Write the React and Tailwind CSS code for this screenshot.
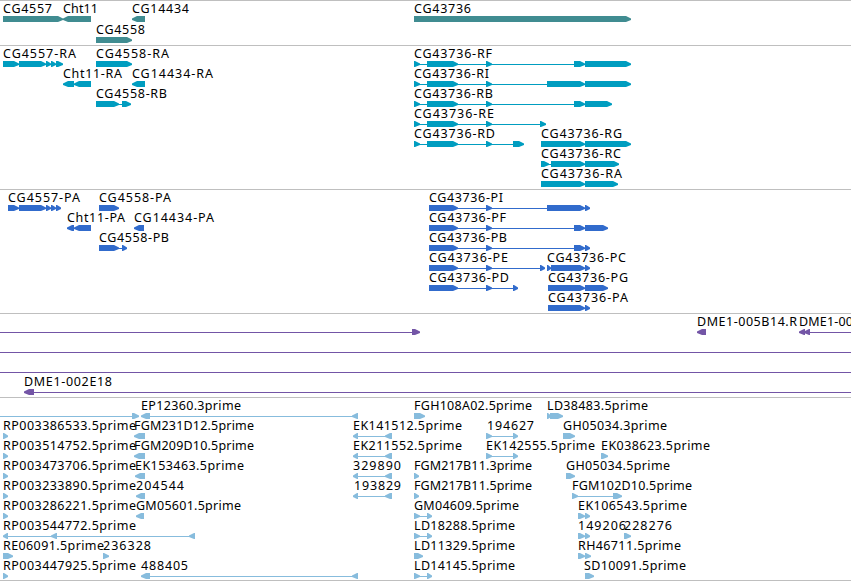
// Feature tuple: [row, direction, blocks, label?, labelX?, labelEnd?, lineRange?]
const tracks = [
  {
    name: 'genes', height: 45, pitch: 21, top: 16, color: '#408c91',
    features: [
      [0, 1, [[3, 63]], 'CG4557', 3, 52],
      [0, -1, [[63, 91]], 'Cht11', 63, 98],
      [0, -1, [[132, 145]], 'CG14434', 132, 189],
      [1, 1, [[96, 132]], 'CG4558', 96, 145],
      [0, 1, [[414, 631]], 'CG43736', 414, 471],
    ],
  },
  {
    name: 'transcripts', height: 144, pitch: 20, top: 16, color: '#009dc0',
    features: [
      [0, 1, [[3, 19], [19, 46], [46, 51], [51, 56], [56, 63]], 'CG4557-RA', 3, 76],
      [0, 1, [[96, 132]], 'CG4558-RA', 96, 169],
      [1, -1, [[63, 74], [74, 91]], 'Cht11-RA', 63, 122],
      [1, -1, [[132, 145]], 'CG14434-RA', 132, 213],
      [2, 1, [[96, 119], [122, 131]], 'CG4558-RB', 96, 167],
      [0, 1, [[414, 420], [427, 458], [486, 492], [574, 585], [585, 631]], 'CG43736-RF', 414, 492],
      [1, 1, [[414, 420], [427, 458], [486, 492], [547, 585], [585, 631]], 'CG43736-RI', 414, 489],
      [2, 1, [[414, 420], [427, 458], [486, 492], [574, 585], [585, 612]], 'CG43736-RB', 414, 493],
      [3, 1, [[414, 420], [427, 458], [486, 492], [540, 546]], 'CG43736-RE', 414, 494],
      [4, 1, [[414, 420], [427, 458], [486, 492], [513, 524]], 'CG43736-RD', 414, 495],
      [4, 1, [[541, 585], [585, 631]], 'CG43736-RG', 541, 622],
      [5, 1, [[541, 549], [551, 585], [585, 619]], 'CG43736-RC', 541, 621],
      [6, 1, [[541, 585], [585, 618]], 'CG43736-RA', 541, 622],
    ],
  },
  {
    name: 'proteins', height: 124, pitch: 20, top: 16, color: '#316bcc',
    features: [
      [0, 1, [[8, 19], [19, 46], [46, 51], [51, 56], [56, 61]], 'CG4557-PA', 8, 80],
      [0, 1, [[99, 119]], 'CG4558-PA', 99, 171],
      [1, -1, [[67, 74], [74, 91]], 'Cht11-PA', 67, 125],
      [1, -1, [[134, 144]], 'CG14434-PA', 134, 214],
      [2, 1, [[99, 119], [122, 127]], 'CG4558-PB', 99, 169],
      [0, 1, [[429, 458], [486, 492], [547, 585], [585, 590]], 'CG43736-PI', 429, 503],
      [1, 1, [[429, 458], [486, 492], [574, 585], [585, 608]], 'CG43736-PF', 429, 506],
      [2, 1, [[429, 458], [486, 492], [574, 585], [585, 590]], 'CG43736-PB', 429, 507],
      [3, 1, [[429, 458], [486, 492], [540, 545]], 'CG43736-PE', 429, 508],
      [4, 1, [[429, 458], [486, 492], [513, 518]], 'CG43736-PD', 429, 509],
      [3, 1, [[547, 551], [551, 585], [585, 590]], 'CG43736-PC', 547, 626],
      [4, 1, [[548, 585], [585, 608]], 'CG43736-PG', 548, 628],
      [5, 1, [[548, 585], [585, 590]], 'CG43736-PA', 548, 628],
    ],
  },
  {
    name: 'BAC ends', height: 84, pitch: 20, top: 16, color: '#7355a6',
    features: [
      [0, 1, [[412, 420]], '', 0, 0, [0, 420]],
      [0, -1, [[697, 706]], 'DME1-005B14.R', 697, 797],
      [0, -1, [[799, 805], [804, 810]], 'DME1-00', 799, 853, [799, 851]],
      [1, -1, [], '', 0, 0, [0, 851]],
      [2, -1, [], '', 0, 0, [0, 851]],
      [3, -1, [[24, 34]], 'DME1-002E18', 24, 112, [24, 851]],
    ],
  },
  {
    name: 'ESTs', height: 183, pitch: 20, top: 16, color: '#87bcdd',
    features: [
      [0, 1, [[132, 139]], '', 0, 0, [0, 139]],
      [0, -1, [[141, 150], [352, 358]], 'EP12360.3prime', 141, 241],
      [0, 1, [[414, 425]], 'FGH108A02.5prime', 414, 532],
      [0, 1, [[547, 551], [550, 563]], 'LD38483.5prime', 547, 648],
      [1, 1, [[3, 8]], 'RP003386533.5prime', 3, 136],
      [1, -1, [[134, 145]], 'FGM231D12.5prime', 134, 254],
      [1, -1, [[353, 358], [385, 392]], 'EK141512.5prime', 353, 462],
      [1, 1, [[486, 492], [513, 518]], '194627', 487, 534],
      [1, 1, [[563, 575]], 'GH05034.3prime', 563, 667],
      [2, 1, [[3, 8]], 'RP003514752.5prime', 3, 136],
      [2, -1, [[134, 145]], 'FGM209D10.5prime', 134, 254],
      [2, -1, [[353, 358], [385, 392]], 'EK211552.5prime', 353, 462],
      [2, 1, [[486, 492], [513, 518]], 'EK142555.5prime', 486, 595],
      [2, 1, [[601, 608]], 'EK038623.5prime', 601, 710],
      [3, 1, [[3, 8]], 'RP003473706.5prime', 3, 136],
      [3, -1, [[135, 145]], 'EK153463.5prime', 135, 244],
      [3, -1, [[353, 358], [385, 392]], '329890', 353, 401],
      [3, 1, [[414, 419]], 'FGM217B11.3prime', 414, 532],
      [3, 1, [[566, 575]], 'GH05034.5prime', 566, 670],
      [4, 1, [[3, 8]], 'RP003233890.5prime', 3, 136],
      [4, -1, [[136, 145]], '204544', 136, 184],
      [4, -1, [[353, 358], [385, 392]], '193829', 354, 401],
      [4, 1, [[414, 419]], 'FGM217B11.5prime', 414, 532],
      [4, 1, [[572, 578], [613, 622]], 'FGM102D10.5prime', 572, 692],
      [5, 1, [[3, 8]], 'RP003286221.5prime', 3, 136],
      [5, -1, [[136, 144]], 'GM05601.5prime', 136, 241],
      [5, 1, [[414, 420], [427, 432]], 'GM04609.5prime', 414, 519],
      [5, 1, [[578, 585], [585, 590]], 'EK106543.5prime', 578, 687],
      [6, -1, [[3, 8], [51, 57], [189, 195]], 'RP003544772.5prime', 3, 136],
      [6, 1, [[414, 420], [427, 432]], 'LD18288.5prime', 414, 515],
      [6, 1, [[578, 585], [585, 590]], '149206', 578, 626],
      [6, 1, [[624, 631]], '228276', 624, 672],
      [7, 1, [[3, 13]], 'RE06091.5prime', 3, 104],
      [7, 1, [[103, 109]], '236328', 103, 151],
      [7, 1, [[414, 423]], 'LD11329.5prime', 414, 515],
      [7, 1, [[578, 585], [585, 591]], 'RH46711.5prime', 578, 681],
      [8, 1, [[3, 8]], 'RP003447925.5prime', 3, 136],
      [8, -1, [[141, 150], [352, 358]], '488405', 141, 188],
      [8, 1, [[414, 420], [427, 432]], 'LD14145.5prime', 414, 515],
      [8, 1, [[585, 594]], 'SD10091.5prime', 584, 686],
    ],
  },
];

function blockPath(a, b, top, dir) {
  const head = Math.min(6, b - a);
  const upper = top + 2.4;
  const lower = top + 4;
  const bottom = top + 6;
  return dir > 0
    ? `M${a} ${top}H${b - head + 1}L${b} ${upper}V${lower}L${b - head + 1} ${bottom}H${a}Z`
    : `M${b} ${top}H${a + head - 1}L${a} ${upper}V${lower}L${a + head - 1} ${bottom}H${b}Z`;
}

function Feature({ feature, track }) {
  const [row, dir, blocks, label, labelX, labelEnd, range] = feature;
  // The track's top border takes the first pixel of its height.
  const top = track.top - 1 + row * track.pitch;
  const from = range ? range[0] : blocks[0][0];
  const to = range ? range[1] : blocks[blocks.length - 1][1];
  return (
    <g>
      {(range || blocks.length > 1) && (
        <rect x={from} y={top + 3} width={to - from} height={1} fill={track.color} />
      )}
      {blocks.map(([a, b]) => (
        <path key={a} d={blockPath(a, b, top, dir)} fill={track.color} />
      ))}
      {label && (
        <text x={labelX} y={top - 3} textLength={labelEnd - labelX} fill="#000">
          {label}
        </text>
      )}
    </g>
  );
}

export default function App() {
  return (
    <main className="flex h-[581px] w-[851px] flex-col overflow-hidden border-b border-[#bfbfbf] bg-white font-['Noto_Sans','DejaVu_Sans',sans-serif] text-[12.5px]">
      {tracks.map((track) => (
        <section
          key={track.name}
          className="shrink-0 overflow-hidden border-t border-[#bfbfbf]"
          style={{ height: track.height }}
        >
          <svg width="851" height={track.height - 1} className="block">
            {track.features.map((feature, i) => (
              <Feature key={i} feature={feature} track={track} />
            ))}
          </svg>
        </section>
      ))}
    </main>
  );
}
